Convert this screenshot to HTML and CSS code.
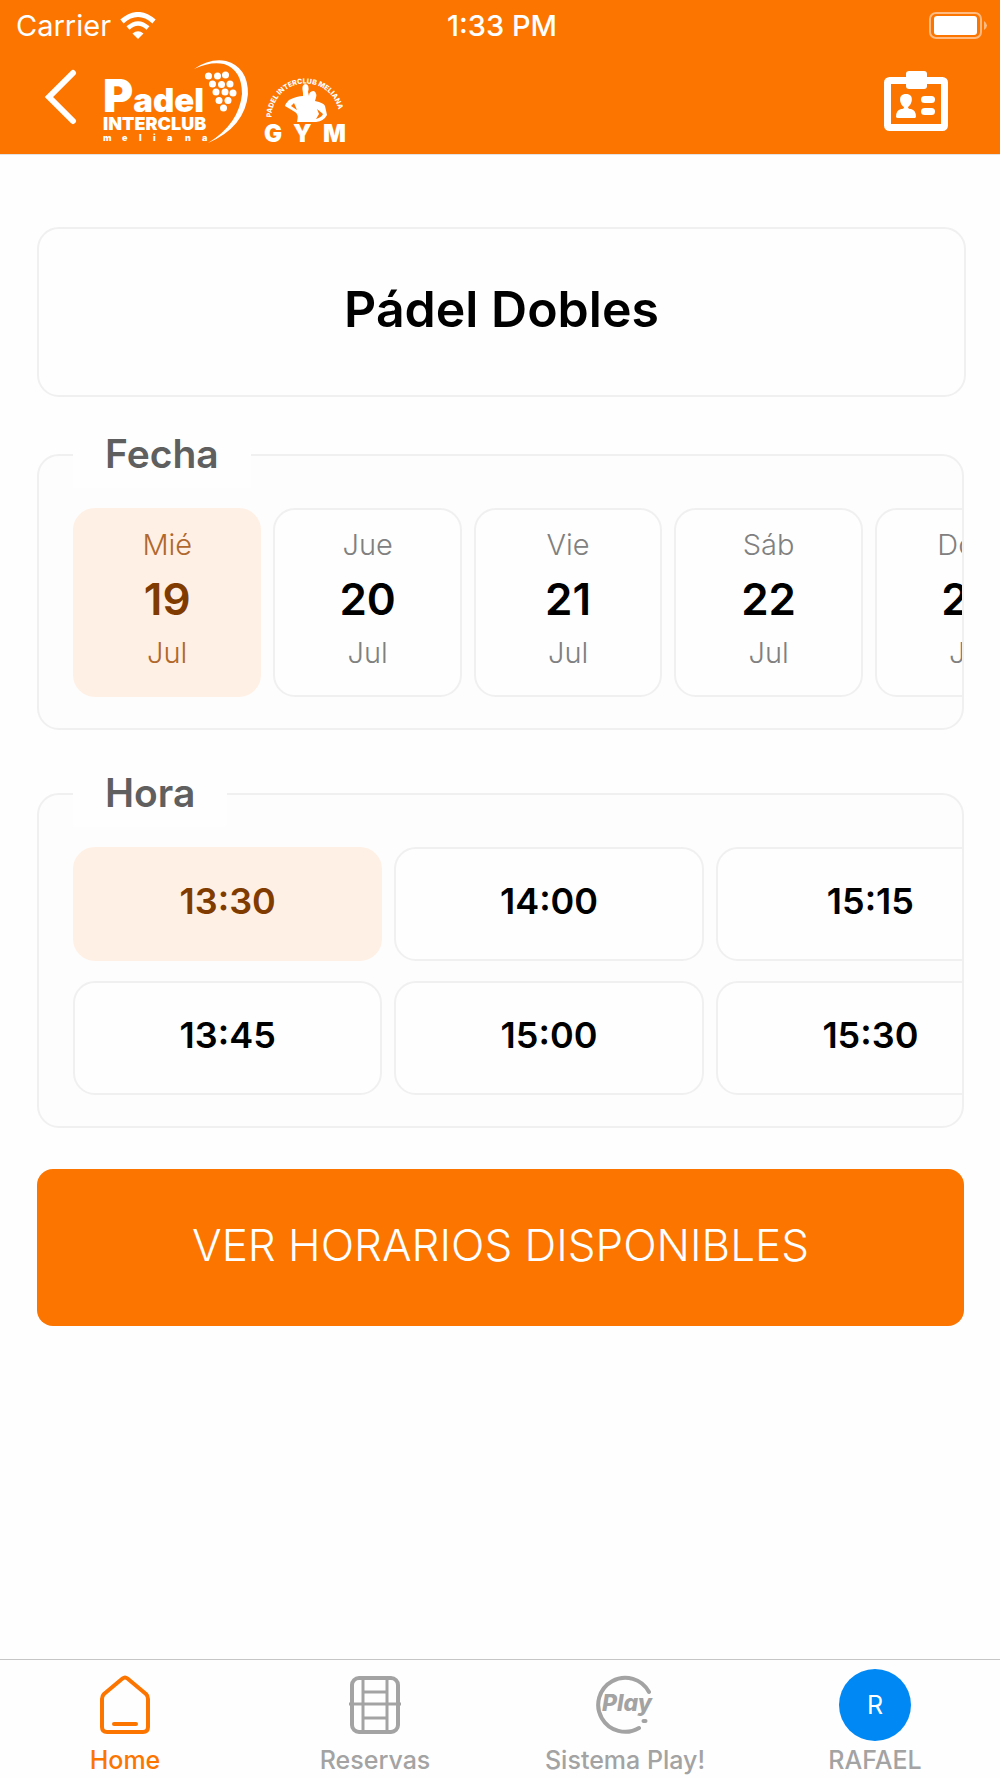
FILE: index.html
```html
<!DOCTYPE html>
<html lang="es">
<head>
    <meta charset="UTF-8">
    <meta name="viewport" content="width=device-width, initial-scale=1.0">
    <link rel="stylesheet" href="styles.css">
    <title>Pádel Dobles</title>
</head>
<body>
    <header class="header">
        <!-- Status bar -->
        <div class="status">
            <div class="status-left">
                <span>Carrier</span>
                <svg width="36" height="27" viewBox="0 0 36 27" fill="none" stroke="#fff">
                    <path d="M2 9.500Q18-4.500 34 9.500" stroke-width="5"/>
                    <path d="M8 16Q18 7 28 16" stroke-width="4.500"/>
                    <path d="M18 27L12.500 21.500Q18 17 23.500 21.500Z" fill="#fff" stroke="none"/>
                </svg>
            </div>
            <span class="status-time">1:33 PM</span>
            <div class="status-right">
                <svg width="60" height="28" viewBox="0 0 60 28">
                    <rect x="2" y="1" width="51" height="25" rx="6" fill="none" stroke="#fff" stroke-opacity="0.5" stroke-width="2"/>
                    <rect x="6" y="4" width="43" height="19" rx="3" fill="#fff"/>
                    <path d="M56 9Q62 13.500 56 18Z" fill="#fff" fill-opacity="0.5"/>
                </svg>
            </div>
        </div>
        <!-- Back, logos and card -->
        <div class="topbar">
            <button class="icon-btn" type="button" aria-label="Volver">
                <svg width="36" height="56" viewBox="0 0 36 56" fill="none" stroke="#fff" stroke-width="6" stroke-linecap="round" stroke-linejoin="miter">
                    <path d="M30 4L6 28L30 52"/>
                </svg>
            </button>
            <svg class="logo-padel" width="148" height="86" viewBox="0 0 148 86" fill="#fff">
                <text class="logo-big" x="0" y="54"><tspan class="logo-cap">P</tspan>adel</text>
                <text class="logo-mid" x="0" y="72">INTERCLUB</text>
                <text class="logo-small" y="83" x="0 19 36 50 64 82 99">meliana</text>
                <path d="M91 11Q107 0 123 3Q145 9 145 36Q142 69 105 85Q136 66 139 36Q139 12 121 6Q108 3 91 11Z"/>
                <g>
                    <circle cx="105.500" cy="18" r="3.500"/><circle cx="114.500" cy="18" r="3.500"/><circle cx="122.500" cy="17" r="3.500"/>
                    <circle cx="109.500" cy="26" r="3.500"/><circle cx="118.500" cy="26.500" r="3.500"/><circle cx="127" cy="26" r="3.500"/>
                    <circle cx="113" cy="34" r="3.500"/><circle cx="122" cy="34" r="3.500"/><circle cx="130" cy="35" r="3.500"/>
                    <circle cx="116" cy="42.500" r="3.500"/><circle cx="125" cy="42.500" r="3.500"/>
                    <circle cx="120.500" cy="50" r="3.500"/>
                </g>
            </svg>
            <svg class="logo-gym" width="86" height="70" viewBox="0 0 86 70" fill="#fff">
                <defs><path id="arc" d="M8.500 43.500A34 34 0 1 1 76.500 43.500"/></defs>
                <text class="logo-arc"><textPath href="#arc">PADEL INTERCLUB MELIANA</textPath></text>
                <path d="M40 19Q38 11 42 10Q47 10 45 18L46 22Q46 17 51 17Q55 19 52 27Q61 29 62 32L64 41Q61 47 53 48L34 48Q36 40 32 38L22 32Q22 30 26 26Q34 22 40 22ZM31 29L28 32L34 36ZM54 35L56 40L53 45Q59 43 60 40Z" fill-rule="evenodd"/>
                <text class="logo-letters" y="68" x="1 30 60">GYM</text>
            </svg>
            <button class="icon-btn card-btn" type="button" aria-label="Mi carnet">
                <svg width="64" height="60" viewBox="0 0 64 60" fill="#fff">
                    <rect x="3.500" y="9.500" width="57" height="47" rx="2" fill="none" stroke="#fff" stroke-width="7"/>
                    <rect x="22" y="0" width="21" height="18" rx="3"/>
                    <path d="M22 23C13 23 16 34 20 36Q20 38 17 38Q12 39 12 46L13 47H31L32 46Q32 39 27 38Q24 38 24 36C28 34 31 23 22 23Z"/>
                    <rect x="37" y="25" width="14" height="7" rx="3.500"/>
                    <rect x="37" y="37" width="14" height="7" rx="3.500"/>
                </svg>
            </button>
        </div>
    </header>

    <main class="main">
        <div class="title-card"><h1>Pádel Dobles</h1></div>

        <fieldset class="panel">
            <legend>Fecha</legend>
            <div class="scroller dates">
                <button class="date selected" type="button"><span>Mié</span><b>19</b><span>Jul</span></button>
                <button class="date" type="button"><span>Jue</span><b>20</b><span>Jul</span></button>
                <button class="date" type="button"><span>Vie</span><b>21</b><span>Jul</span></button>
                <button class="date" type="button"><span>Sáb</span><b>22</b><span>Jul</span></button>
                <button class="date" type="button"><span>Dom</span><b>23</b><span>Jul</span></button>
            </div>
        </fieldset>

        <fieldset class="panel">
            <legend>Hora</legend>
            <div class="scroller times">
                <button class="time selected" type="button">13:30</button>
                <button class="time" type="button">13:45</button>
                <button class="time" type="button">14:00</button>
                <button class="time" type="button">15:00</button>
                <button class="time" type="button">15:15</button>
                <button class="time" type="button">15:30</button>
            </div>
        </fieldset>

        <button class="submit" type="button">VER HORARIOS DISPONIBLES</button>
    </main>

    <!-- Bottom tabs -->
    <nav class="tabs">
        <a class="tab active" href="#home">
            <span class="tab-icon">
                <svg width="52" height="60" viewBox="0 0 52 60" fill="none" stroke="currentColor" stroke-width="4" stroke-linecap="round" stroke-linejoin="round">
                    <path d="M23.500 3.500Q26 1.500 28.500 3.500L47 19Q49 21 49 24V52Q49 57 44 57H8Q3 57 3 52V24Q3 21 5 19Z"/>
                    <path d="M15 49H37"/>
                </svg>
            </span>
            <span>Home</span>
        </a>
        <a class="tab" href="#reservas">
            <span class="tab-icon">
                <svg width="52" height="60" viewBox="0 0 52 60" fill="none" stroke="currentColor" stroke-width="3">
                    <rect x="3" y="3" width="46" height="54" rx="7" stroke-width="4"/>
                    <path d="M14 3V57M38 3V57M14 17H38M0 29H52M14 43H38"/>
                </svg>
            </span>
            <span>Reservas</span>
        </a>
        <a class="tab" href="#play">
            <span class="tab-icon">
                <svg width="60" height="60" viewBox="0 0 60 60" fill="none" stroke="currentColor" stroke-width="4" stroke-linecap="round">
                    <path d="M54 17A27 27 0 1 0 44 53"/>
                    <text class="play" x="7" y="36">Play</text>
                    <path d="M48.500 46H50.500"/>
                </svg>
            </span>
            <span>Sistema Play!</span>
        </a>
        <a class="tab" href="#perfil">
            <span class="tab-icon avatar">R</span>
            <span>RAFAEL</span>
        </a>
    </nav>
</body>
</html>
```
FILE: styles.css
```css
* {
    box-sizing: border-box;
}
body {
    margin: 0;
    min-height: 100vh;
    display: flex;
    flex-direction: column;
    background-color: #fefefe;
    color: #000;
    font-family: Inter, "Open Sans", sans-serif;
}
button {
    font-family: inherit;
    cursor: pointer;
}
svg {
    display: block;
}

/* Header */
.header {
    background-color: #fc7500;
    border-bottom: 1px solid #e2e2e2;
    color: #fff;
}
.status {
    display: grid;
    grid-template-columns: 1fr auto 1fr;
    align-items: center;
    height: 51px;
    padding: 0 12px 0 16px;
    font-size: 29px;
}
.status-left {
    display: flex;
    align-items: center;
    gap: 9px;
}
.status-time {
    font-weight: 500;
}
.status-right {
    display: flex;
    justify-content: flex-end;
}
.topbar {
    display: flex;
    align-items: center;
    height: 103px;
    padding: 0 52px 12px 43px;
}
.icon-btn {
    padding: 0;
    border: 0;
    background: none;
}
.logo-padel {
    margin: 8px 0 0 24px;
}
.logo-gym {
    margin: 24px 0 0 12px;
}
.card-btn {
    margin: 8px 0 0 auto;
}
.logo-big {
    font-size: 33px;
    font-weight: 900;
}
.logo-cap {
    font-size: 46px;
}
.logo-mid {
    font-size: 18px;
    font-weight: 900;
}
.logo-small {
    font-size: 9px;
    font-weight: 900;
}
.logo-arc {
    font-size: 7px;
    font-weight: 800;
}
.logo-letters {
    font-size: 24px;
    font-weight: 900;
}

/* Content */
.main {
    flex: 1;
    padding: 72px 36px 40px 37px;
}
.title-card {
    display: flex;
    align-items: center;
    justify-content: center;
    height: 170px;
    margin-right: -2px;
    border: 2px solid #f0f0f0;
    border-radius: 22px;
}
.title-card h1 {
    margin: 0;
    padding-bottom: 6px;
    font-size: 50px;
    font-weight: 600;
}
.panel {
    min-width: 0;
    margin: 25px 0 0;
    padding: 20px 0 31px 34px;
    border: 2px solid #f0f0f0;
    border-radius: 22px;
    background-color: #fdfdfd;
}
.panel + .panel {
    margin-top: 31px;
}
.panel legend {
    padding: 0 32px 2px;
    background-color: #fefefe;
    color: #5f5f5f;
    font-size: 39px;
    font-weight: 600;
    line-height: 64px;
}
.scroller {
    display: grid;
    overflow-x: auto;
    scrollbar-width: none;
}
.dates {
    grid-auto-flow: column;
    grid-auto-columns: 21.2%;
    gap: 12px;
}
.times {
    grid-auto-flow: column;
    grid-template-rows: 114px 114px;
    grid-auto-columns: 34.8%;
    gap: 20px 12px;
}
.date, .time {
    padding: 0;
    border: 2px solid #f0f0f0;
    border-radius: 22px;
    background-color: #fefefe;
    color: #000;
}
.date {
    display: flex;
    flex-direction: column;
    align-items: center;
    height: 189px;
    padding-top: 8px;
    font-size: 29px;
    font-weight: 300;
    line-height: 54px;
}
.date span {
    color: #808080;
}
.date b {
    font-size: 44px;
    font-weight: 600;
}
.time {
    padding-bottom: 6px;
    font-size: 36px;
    font-weight: 600;
}
.selected {
    border-color: #fff0e5;
    background-color: #fff0e5;
    color: #803b00;
}
.selected span {
    color: #b0682d;
}
.submit {
    display: block;
    width: 100%;
    height: 157px;
    margin-top: 41px;
    padding-bottom: 6px;
    border: 0;
    border-radius: 16px;
    background-color: #fc7500;
    color: #fff;
    font-size: 44px;
    font-weight: 300;
}

/* Tab bar */
.tabs {
    display: grid;
    grid-template-columns: repeat(4, 1fr);
    padding: 9px 0 4px;
    border-top: 1px solid #c6c6c6;
    background-color: #fefefe;
}
.tab {
    display: flex;
    flex-direction: column;
    align-items: center;
    gap: 5px;
    color: #a3a3a3;
    font-size: 25px;
    font-weight: 500;
    line-height: 28px;
    text-decoration: none;
}
.active {
    color: #fc7500;
}
.tab-icon {
    display: flex;
    align-items: center;
    justify-content: center;
    width: 72px;
    height: 72px;
}
.avatar {
    border-radius: 50%;
    background-color: #0088f5;
    color: #fff;
    font-weight: 400;
}
.play {
    fill: currentColor;
    stroke: none;
    font-size: 23px;
    font-style: italic;
    font-weight: 800;
}
```
